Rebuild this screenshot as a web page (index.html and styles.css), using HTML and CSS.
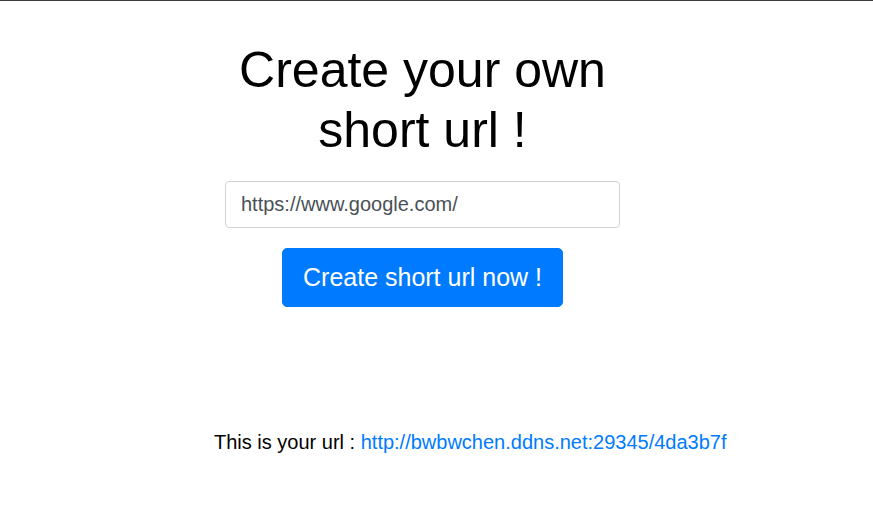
FILE: index.html
```html
<!DOCTYPE html>
<html lang="en">
<head>
<meta charset="utf-8">
<title>Short url</title>
<link rel="stylesheet" href="styles.css">
</head>
<body>
<main class="page">
  <section class="creator">
    <h1 class="title">Create your own short url !</h1>
    <input class="url-input" type="text" value="https://www.google.com/">
    <button class="create-btn" type="button">Create short url now !</button>
  </section>
  <p class="result">This is your url : <a class="result-link" href="#">http://bwbwchen.ddns.net:29345/4da3b7f</a></p>
</main>
</body>
</html>
```
FILE: styles.css
```css
html, body {
  margin: 0;
  padding: 0;
  background: #fff;
}
body {
  border-top: 1px solid #3c3c3c;
  font-family: "Liberation Sans", Arial, sans-serif;
  color: #000;
}
.page {
  padding-top: 39px;
}
.creator {
  width: 395px;
  margin-left: 225px;
  display: flex;
  flex-direction: column;
  align-items: center;
}
.title {
  margin: 0 0 21px;
  font-size: 50px;
  line-height: 1.2;
  font-weight: 400;
  text-align: center;
}
.url-input {
  box-sizing: border-box;
  width: 100%;
  height: 47px;
  padding: 8px 15px;
  font-family: inherit;
  font-size: 20px;
  color: #495057;
  border: 1px solid #ced4da;
  border-radius: 4px;
  background: #fff;
  outline: none;
}
.create-btn {
  margin-top: 20px;
  padding: 10px 20px;
  font-family: inherit;
  font-size: 25px;
  line-height: 37px;
  color: #fff;
  background: #007bff;
  border: 1px solid #007bff;
  border-radius: 5px;
}
.result {
  margin: 120px 0 0 214px;
  font-size: 20px;
  line-height: 30px;
}
.result-link {
  color: #007bff;
  text-decoration: none;
}
```
